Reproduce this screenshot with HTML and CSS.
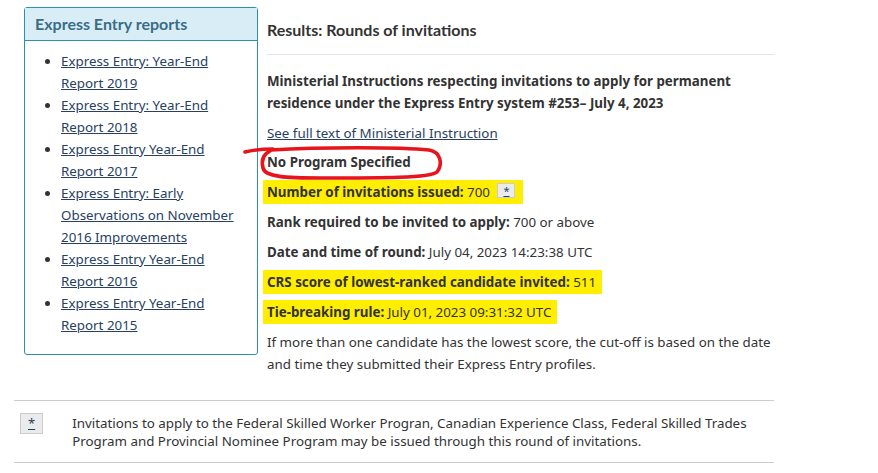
FILE: index.html
```html
<!DOCTYPE html>
<html lang="en">
<head>
<meta charset="utf-8">
<title>Results: Rounds of invitations</title>
<link rel="stylesheet" href="styles.css">
</head>
<body>
<div class="page">
  <div class="layout">
    <aside class="panel">
      <div class="panel-head"><h2>Express Entry reports</h2></div>
      <ul class="panel-list">
        <li><a href="#">Express Entry: Year-End Report 2019</a></li>
        <li><a href="#">Express Entry: Year-End Report 2018</a></li>
        <li><a href="#">Express Entry Year-End Report 2017</a></li>
        <li><a href="#">Express Entry: Early Observations on November 2016 Improvements</a></li>
        <li><a href="#">Express Entry Year-End Report 2016</a></li>
        <li><a href="#">Express Entry Year-End Report 2015</a></li>
      </ul>
    </aside>
    <main class="results">
      <h3 class="title">Results: Rounds of invitations</h3>
      <p class="mi"><strong>Ministerial Instructions respecting invitations to apply for permanent residence under the Express Entry system #253– July 4, 2023</strong></p>
      <p class="row"><a href="#">See full text of Ministerial Instruction</a></p>
      <p class="row circled"><strong>No Program Specified</strong>
        <svg class="ring" width="200" height="40" viewBox="0 0 200 40"><path d="M10 6 C 60 3, 140 3, 168 6 C 180 8, 182 20, 176 28 C 170 34, 120 34, 60 34 C 25 34, 4 33, 2 24 C 0 16, 3 10, 9 7" fill="none" stroke="#e8141b" stroke-width="3.6" stroke-linecap="round"/><path d="M-16 8 C -8 6, 0 5, 12 5" fill="none" stroke="#e8141b" stroke-width="3.6" stroke-linecap="round"/></svg>
      </p>
      <p class="row"><span class="hl hl-num"><strong>Number of invitations issued:</strong> 700 <a class="fn" href="#">*</a></span></p>
      <p class="row"><strong>Rank required to be invited to apply:</strong> 700 or above</p>
      <p class="row"><strong>Date and time of round:</strong> July 04, 2023 14:23:38 UTC</p>
      <p class="row"><span class="hl hl-crs"><strong>CRS score of lowest-ranked candidate invited:</strong> 511</span></p>
      <p class="row"><span class="hl hl-tie"><strong>Tie-breaking rule:</strong> July 01, 2023 09:31:32 UTC</span></p>
      <p class="row">If more than one candidate has the lowest score, the cut-off is based on the date and time they submitted their Express Entry profiles.</p>
    </main>
  </div>
  <section class="notes">
    <div class="note">
      <a class="fn fn-note" href="#">*</a>
      <p>Invitations to apply to the Federal Skilled Worker Progran, Canadian Experience Class, Federal Skilled Trades Program and Provincial Nominee Program may be issued through this round of invitations.</p>
    </div>
  </section>
</div>
</body>
</html>
```

FILE: styles.css
```css
* { box-sizing: border-box; }
body {
  margin: 0;
  background: #fff;
  font-family: "Noto Sans", "Open Sans", sans-serif;
  font-size: 13.35px;
  line-height: 22px;
  color: #333;
}
a { color: #284162; }
.page { width: 878px; }
.layout {
  display: flex;
  align-items: flex-start;
  padding: 7px 0 0 24px;
}
.panel {
  width: 234px;
  border: 1px solid #2b92ad;
  border-radius: 3px;
  padding-bottom: 18px;
  flex: none;
}
.panel-head {
  background: #d9edf6;
  border-bottom: 1px solid #2b92ad;
  padding: 5px 10px 6px;
}
.panel-head h2 {
  margin: 0;
  font-family: Lato, sans-serif;
  font-weight: 700;
  font-size: 16px;
  line-height: 21px;
  color: #3a6e86;
}
.panel-list {
  margin: 9px 0 0;
  padding: 0 16px 0 36px;
}
.panel-list li { line-height: 22px; }
.results {
  width: 508px;
  margin-left: 9px;
}
.title {
  margin: 12px 0 0;
  padding-bottom: 13px;
  border-bottom: 1px solid #e5e5e5;
  font-family: Lato, sans-serif;
  font-weight: 700;
  font-size: 16px;
  line-height: 22px;
  color: #333;
}
.mi { margin: 15px 0 0; line-height: 22px; }
.row { margin: 8px 0 0; }
.circled { position: relative; margin-top: 7px; }
.ring {
  position: absolute;
  left: -6px;
  top: -7px;
  overflow: visible;
}
.hl {
  background: #ffee00;
  padding: 3px 6px 3px 4px;
  margin-left: -4px;
}
.hl-crs { padding-right: 6px; }
.fn {
  display: inline-block;
  font-size: 11px;
  line-height: 13px;
  padding: 0 5px;
  margin-left: 4px;
  background: #eaebed;
  border: 1px solid #ccc;
  color: #284162;
  vertical-align: 2px;
}
.hl-num { padding-right: 8px; }
.notes {
  margin: 25px 0 0 14px;
  width: 760px;
  border-top: 1px solid #ccc;
  border-bottom: 1px solid #ccc;
  padding: 12px 0 12px;
}
.note {
  display: flex;
  align-items: flex-start;
}
.fn-note {
  margin: 0 0 0 6px;
  padding: 2px 7px;
  line-height: 15px;
  font-size: 13px;
  flex: none;
}
.note p {
  margin: 1px 0 0 29px;
  line-height: 18px;
}
```
